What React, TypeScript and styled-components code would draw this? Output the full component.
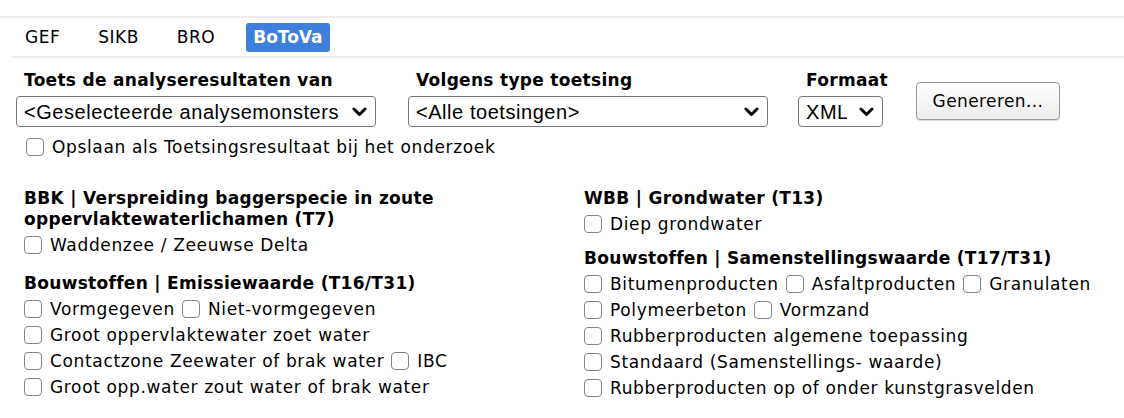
import React from 'react';
import styled, { createGlobalStyle } from 'styled-components';

const GlobalStyle = createGlobalStyle`
  html, body {
    margin: 0;
    padding: 0;
    background: #fff;
  }
  body {
    font-family: "DejaVu Sans", Verdana, sans-serif;
    color: #000;
  }
`;

const Page = styled.div`
  width: 1124px;
  margin-top: 16px;
  border-top: 2px solid #eeeeee;
`;

const TabBar = styled.div`
  display: flex;
  align-items: center;
  margin-left: 12px;
  height: 38px;
  padding-left: 6px;
  border-bottom: 2px solid #eeeeee;
`;

const Tab = styled.span<{ $active?: boolean }>`
  font-size: 17px;
  font-weight: ${(p) => (p.$active ? 'bold' : 'normal')};
  letter-spacing: ${(p) => (p.$active ? '0' : '0.5px')};
  line-height: 19px;
  padding: 5px 7px;
  margin-right: 24px;
  border-radius: 3px;
  background: ${(p) => (p.$active ? '#3d7fdb' : 'transparent')};
  color: ${(p) => (p.$active ? '#fff' : '#000')};
`;

const FormRow = styled.div`
  display: flex;
  align-items: flex-start;
  padding: 12px 0 0 16px;
`;

const Field = styled.div<{ $width: number; $gap: number }>`
  display: flex;
  flex-direction: column;
  width: ${(p) => p.$width}px;
  margin-right: ${(p) => p.$gap}px;
`;

const FieldLabel = styled.label`
  font-weight: bold;
  font-size: 17px;
  letter-spacing: 0.3px;
  line-height: 20px;
  padding-left: 8px;
  margin-bottom: 6px;
  white-space: nowrap;
`;

const SelectWrap = styled.div`
  position: relative;
  width: 100%;
`;

const Select = styled.select`
  appearance: none;
  -webkit-appearance: none;
  width: 100%;
  height: 31px;
  box-sizing: border-box;
  border: 1px solid #777;
  border-radius: 4px;
  background: #fff;
  font-family: "Liberation Sans", Arial, sans-serif;
  font-size: 20px;
  letter-spacing: 0.55px;
  color: #000;
  padding: 0 35px 0 7px;
  outline: none;
`;

const Chevron = styled.svg`
  position: absolute;
  right: 9px;
  top: 11px;
  width: 15px;
  height: 10px;
  pointer-events: none;
`;

const Button = styled.button`
  margin-top: 12px;
  height: 38px;
  width: 144px;
  box-sizing: border-box;
  border: 1px solid #9a9a9a;
  border-radius: 4px;
  background: linear-gradient(#ffffff, #ececec);
  box-shadow: 0 1px 1px rgba(0, 0, 0, 0.15);
  font-family: "DejaVu Sans", Verdana, sans-serif;
  font-size: 17px;
  letter-spacing: 0.4px;
  color: #000;
`;

const CheckRow = styled.label`
  display: flex;
  align-items: center;
  font-size: 17px;
  letter-spacing: 0.65px;
  line-height: 26px;
  white-space: nowrap;
  margin-right: 7px;
`;

const SaveRow = styled(CheckRow)`
  padding: 7px 0 0 26px;
`;

const Check = styled.input.attrs({ type: 'checkbox' })`
  appearance: none;
  -webkit-appearance: none;
  width: 18px;
  height: 18px;
  box-sizing: border-box;
  border: 1.5px solid #858585;
  border-radius: 4px;
  background: #fff;
  margin: 0 8px 0 0;
  flex: none;
`;

const Columns = styled.div`
  display: grid;
  grid-template-columns: 560px 1fr;
  padding: 28px 0 0 24px;
`;

const Column = styled.div`
  display: flex;
  flex-direction: column;
`;

const Group = styled.div<{ $gap: number }>`
  margin-bottom: ${(p) => p.$gap}px;
`;

const GroupTitle = styled.div`
  font-weight: bold;
  font-size: 17px;
  letter-spacing: 0.3px;
  line-height: 21px;
  max-width: 470px;
  margin-bottom: 2px;
`;

const Line = styled.div`
  display: flex;
  align-items: center;
`;

const ChevronIcon = () => (
  <Chevron viewBox="0 0 15 10">
    <path d="M2 2 L7.5 7.5 L13 2" fill="none" stroke="#000" strokeWidth="3" strokeLinecap="round" strokeLinejoin="round" />
  </Chevron>
);

const Box: React.FC<{ label: string }> = ({ label }) => (
  <CheckRow>
    <Check />
    {label}
  </CheckRow>
);

type GroupData = { title: string; lines: string[][] };

const left: GroupData[] = [
  {
    title: 'BBK | Verspreiding baggerspecie in zoute oppervlaktewaterlichamen (T7)',
    lines: [['Waddenzee / Zeeuwse Delta']],
  },
  {
    title: 'Bouwstoffen | Emissiewaarde (T16/T31)',
    lines: [
      ['Vormgegeven', 'Niet-vormgegeven'],
      ['Groot oppervlaktewater zoet water'],
      ['Contactzone Zeewater of brak water', 'IBC'],
      ['Groot opp.water zout water of brak water'],
    ],
  },
];

const right: GroupData[] = [
  {
    title: 'WBB | Grondwater (T13)',
    lines: [['Diep grondwater']],
  },
  {
    title: 'Bouwstoffen | Samenstellingswaarde (T17/T31)',
    lines: [
      ['Bitumenproducten', 'Asfaltproducten', 'Granulaten'],
      ['Polymeerbeton', 'Vormzand'],
      ['Rubberproducten algemene toepassing'],
      ['Standaard (Samenstellings- waarde)'],
      ['Rubberproducten op of onder kunstgrasvelden'],
    ],
  },
];

const GroupList: React.FC<{ groups: GroupData[]; gap: number }> = ({ groups, gap }) => (
  <Column>
    {groups.map((g) => (
      <Group key={g.title} $gap={gap}>
        <GroupTitle>{g.title}</GroupTitle>
        {g.lines.map((line, i) => (
          <Line key={i}>
            {line.map((l) => (
              <Box key={l} label={l} />
            ))}
          </Line>
        ))}
      </Group>
    ))}
  </Column>
);

export default function App() {
  return (
    <>
      <GlobalStyle />
      <Page>
        <TabBar>
          <Tab>GEF</Tab>
          <Tab>SIKB</Tab>
          <Tab>BRO</Tab>
          <Tab $active>BoToVa</Tab>
        </TabBar>
        <FormRow>
          <Field $width={360} $gap={32}>
            <FieldLabel>Toets de analyseresultaten van</FieldLabel>
            <SelectWrap>
              <Select defaultValue="sel">
                <option value="sel">&lt;Geselecteerde analysemonsters&gt;</option>
              </Select>
              <ChevronIcon />
            </SelectWrap>
          </Field>
          <Field $width={360} $gap={30}>
            <FieldLabel>Volgens type toetsing</FieldLabel>
            <SelectWrap>
              <Select defaultValue="all">
                <option value="all">&lt;Alle toetsingen&gt;</option>
              </Select>
              <ChevronIcon />
            </SelectWrap>
          </Field>
          <Field $width={85} $gap={33}>
            <FieldLabel>Formaat</FieldLabel>
            <SelectWrap>
              <Select defaultValue="xml">
                <option value="xml">XML</option>
              </Select>
              <ChevronIcon />
            </SelectWrap>
          </Field>
          <Button type="button">Genereren...</Button>
        </FormRow>
        <SaveRow>
          <Check />
          Opslaan als Toetsingsresultaat bij het onderzoek
        </SaveRow>
        <Columns>
          <GroupList groups={left} gap={15} />
          <GroupList groups={right} gap={11} />
        </Columns>
      </Page>
    </>
  );
}
